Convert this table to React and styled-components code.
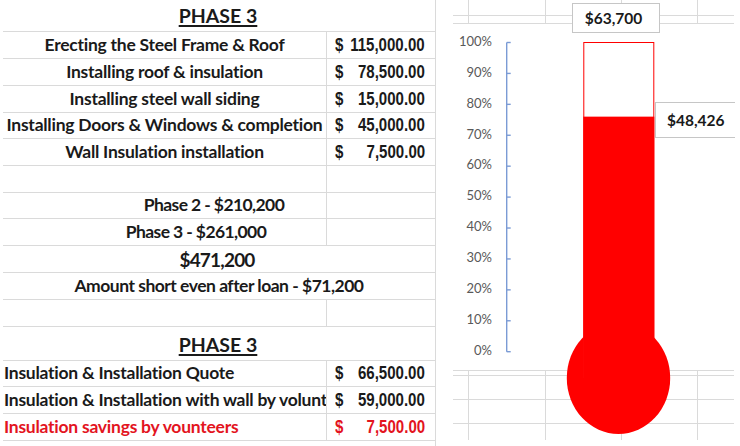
import React from "react";
import styled, { createGlobalStyle } from "styled-components";

const GlobalStyle = createGlobalStyle`
  html, body { margin: 0; padding: 0; background: #ffffff; }
  body { font-family: "Lato", "Liberation Sans", sans-serif; color: #1a1a1a; }
  * { box-sizing: border-box; }
`;

const Page = styled.div`
  width: 740px;
  height: 446px;
  display: flex;
  overflow: hidden;
  background: #fff;
`;

const Sheet = styled.div`
  width: 434px;
  margin-left: 3px;
  display: flex;
  flex-direction: column;
  border-right: 1px solid #dadada;
  height: 446px;
`;

const Row = styled.div`
  display: flex;
  height: ${(p) => p.$h}px;
  border-bottom: 1px solid #dadada;
  flex: none;
`;

const LabelCell = styled.div`
  width: 324px;
  flex: none;
  display: flex;
  align-items: flex-end;
  justify-content: ${(p) => (p.$left ? "flex-start" : "center")};
  padding-bottom: 3px;
  padding-left: ${(p) => (p.$left ? 1 : p.$indent || 0)}px;
  border-right: 1px solid #dadada;
  font-family: "Lato", sans-serif;
  font-weight: 700;
  font-size: 17.5px;
  letter-spacing: ${(p) => p.$ls ?? -0.25}px;
  line-height: 20px;
  white-space: nowrap;
  overflow: hidden;
  color: ${(p) => (p.$red ? "#e3141e" : "#1a1a1a")};
`;

const SpanCell = styled.div`
  flex: 1;
  display: flex;
  align-items: flex-end;
  justify-content: center;
  padding-bottom: ${(p) => p.$pb ?? 3}px;
  padding-right: ${(p) => p.$pr ?? 0}px;
  font-family: "Lato", sans-serif;
  font-weight: 700;
  font-size: ${(p) => p.$size || 17.5}px;
  letter-spacing: ${(p) => p.$ls ?? -0.25}px;
  line-height: 20px;
  white-space: nowrap;
  text-decoration: ${(p) => (p.$underline ? "underline" : "none")};
  text-decoration-thickness: 1.5px;
  text-underline-offset: 2px;
`;

const ValueCell = styled.div`
  flex: 1;
  display: flex;
  align-items: flex-end;
  justify-content: space-between;
  padding: 0 10px 3px 8px;
  font-family: "Liberation Sans", "Arial", sans-serif;
  font-weight: 700;
  font-size: 17.5px;
  line-height: 20px;
  white-space: nowrap;
  color: ${(p) => (p.$red ? "#e3141e" : "#1a1a1a")};
`;

const Narrow = styled.span`
  display: inline-block;
  transform: scaleX(0.86);
  transform-origin: ${(p) => (p.$end ? "right" : "left")} center;
  margin-left: ${(p) => (p.$end ? -14 : 0)}px;
`;

const EmptyCell = styled.div`
  flex: 1;
`;

const Right = styled.div`
  flex: 1;
  display: flex;
  flex-direction: column;
  height: 446px;
`;

const GridStrip = styled.div`
  display: flex;
  flex-direction: column;
  margin: 0 6px 0 17px;
  border-top: ${(p) => (p.$topLine ? "1px solid #dadada" : "none")};
`;

const GridRow = styled.div`
  display: flex;
  height: ${(p) => p.$h}px;
  border-bottom: ${(p) => (p.$line ? "1px solid #dadada" : "none")};
`;

const GridCell = styled.div`
  width: ${(p) => p.$w}px;
  flex: none;
  border-right: ${(p) => (p.$last ? "none" : "1px solid #dadada")};
`;

const ChartBox = styled.div`
  position: relative;
  height: 346px;
  flex: none;
  background: #fff;
`;

const ChartSvg = styled.svg`
  position: absolute;
  left: 0;
  top: 0;
  overflow: visible;
  z-index: 1;
`;

const ValueTag = styled.div`
  position: absolute;
  z-index: 2;
  left: ${(p) => p.$left}px;
  top: ${(p) => p.$top}px;
  width: ${(p) => p.$w}px;
  height: ${(p) => p.$h}px;
  background: #fff;
  border: 1px solid #c6c6c6;
  border-right: ${(p) => (p.$open ? "none" : "1px solid #c6c6c6")};
  display: flex;
  align-items: center;
  justify-content: ${(p) => (p.$open ? "flex-start" : "center")};
  padding-left: ${(p) => (p.$open ? 11 : 0)}px;
  padding-right: ${(p) => (p.$open ? 0 : 5)}px;
  font-family: "Lato", sans-serif;
  font-weight: 700;
  font-size: 15.5px;
  color: #1a1a1a;
`;

const gridWidths = [16, 77, 76, 76, 36];

function Strip({ rows, topLine }) {
  return (
    <GridStrip $topLine={topLine}>
      {rows.map((r, i) => (
        <GridRow key={i} $h={r.h} $line={r.line}>
          {gridWidths.map((w, j) => (
            <GridCell key={j} $w={w} $last={j === gridWidths.length - 1} />
          ))}
        </GridRow>
      ))}
    </GridStrip>
  );
}

function Money({ v, red }) {
  return (
    <ValueCell $red={red}>
      <Narrow>$</Narrow>
      <Narrow $end>{v}</Narrow>
    </ValueCell>
  );
}

const items = [
  ["Erecting the Steel Frame & Roof", "115,000.00", 27],
  ["Installing roof & insulation", "78,500.00", 27],
  ["Installing steel wall siding", "15,000.00", 27],
  ["Installing Doors & Windows & completion", "45,000.00", 26],
  ["Wall Insulation installation", "7,500.00", 27],
];

const quotes = [
  ["Insulation & Installation Quote", "66,500.00", 26, false],
  ["Insulation & Installation with wall by volunt", "59,000.00", 27, false],
  ["Insulation savings by vounteers", "7,500.00", 27, true],
];

function Thermometer() {
  const top = 18.5;
  const zero = 327.7;
  const step = (zero - top) / 10;
  const pct = 48426 / 63700;
  const fillY = zero - pct * (zero - top);
  const ticks = Array.from({ length: 11 }, (_, i) => i);
  return (
    <ChartSvg width="304" height="420" viewBox="0 0 304 420">
      {ticks.map((i) => (
        <text
          key={i}
          x="56"
          y={top + i * step}
          textAnchor="end"
          dominantBaseline="middle"
          fontFamily="Lato, sans-serif"
          fontSize="13"
          fill="#595959"
        >
          {100 - i * 10}%
        </text>
      ))}
      <path d={`M70.7 ${top} V${zero}`} stroke="#7b9bd5" strokeWidth="1.4" fill="none" />
      {ticks.map((i) => (
        <path
          key={i}
          d={`M70.7 ${top + i * step} h4`}
          stroke="#7b9bd5"
          strokeWidth="1.4"
          fill="none"
        />
      ))}
      <ellipse cx="182.5" cy="354" rx="51.7" ry="56" fill="#ff0000" />
      <rect x="147.8" y={top} width="70" height={354 - top} fill="#ffffff" stroke="#ff0000" strokeWidth="1" />
      <rect x="147.3" y={fillY} width="71" height={354 - fillY} fill="#ff0000" />
    </ChartSvg>
  );
}

export default function App() {
  return (
    <>
      <GlobalStyle />
      <Page>
        <Sheet>
          <Row $h={32}>
            <SpanCell $size={19.5} $ls={0} $underline $pb={5} $pr={2}>PHASE 3</SpanCell>
          </Row>
          {items.map(([label, v, h]) => (
            <Row key={label} $h={h}>
              <LabelCell>{label}</LabelCell>
              <Money v={v} />
            </Row>
          ))}
          <Row $h={27}>
            <LabelCell />
            <EmptyCell />
          </Row>
          <Row $h={26}>
            <LabelCell $indent={99} $ls={-0.6}>Phase 2 - $210,200</LabelCell>
            <EmptyCell />
          </Row>
          <Row $h={27}>
            <LabelCell $indent={63} $ls={-0.6}>Phase 3 - $261,000</LabelCell>
            <EmptyCell />
          </Row>
          <Row $h={27}>
            <SpanCell $size={19} $ls={-0.8} $pb={2} $pr={4}>$471,200</SpanCell>
          </Row>
          <Row $h={27}>
            <SpanCell $ls={-0.5}>Amount short even after loan - $71,200</SpanCell>
          </Row>
          <Row $h={27}>
            <LabelCell />
            <EmptyCell />
          </Row>
          <Row $h={34}>
            <SpanCell $size={19.5} $ls={0} $underline $pb={5} $pr={2}>PHASE 3</SpanCell>
          </Row>
          {quotes.map(([label, v, h, red]) => (
            <Row key={label} $h={h}>
              <LabelCell $left $red={red}>{label}</LabelCell>
              <Money v={v} red={red} />
            </Row>
          ))}
        </Sheet>
        <Right>
          <Strip rows={[{ h: 16, line: true }, { h: 8, line: true }]} />
          <ChartBox>
            <Thermometer />
            <ValueTag $left={136} $top={-21} $w={88} $h={30}>$63,700</ValueTag>
            <ValueTag $left={219} $top={78} $w={80} $h={36} $open>$48,426</ValueTag>
          </ChartBox>
          <Strip
            topLine
            rows={[
              { h: 5, line: true },
              { h: 24, line: true },
              { h: 24, line: true },
              { h: 16, line: false },
            ]}
          />
        </Right>
      </Page>
    </>
  );
}
